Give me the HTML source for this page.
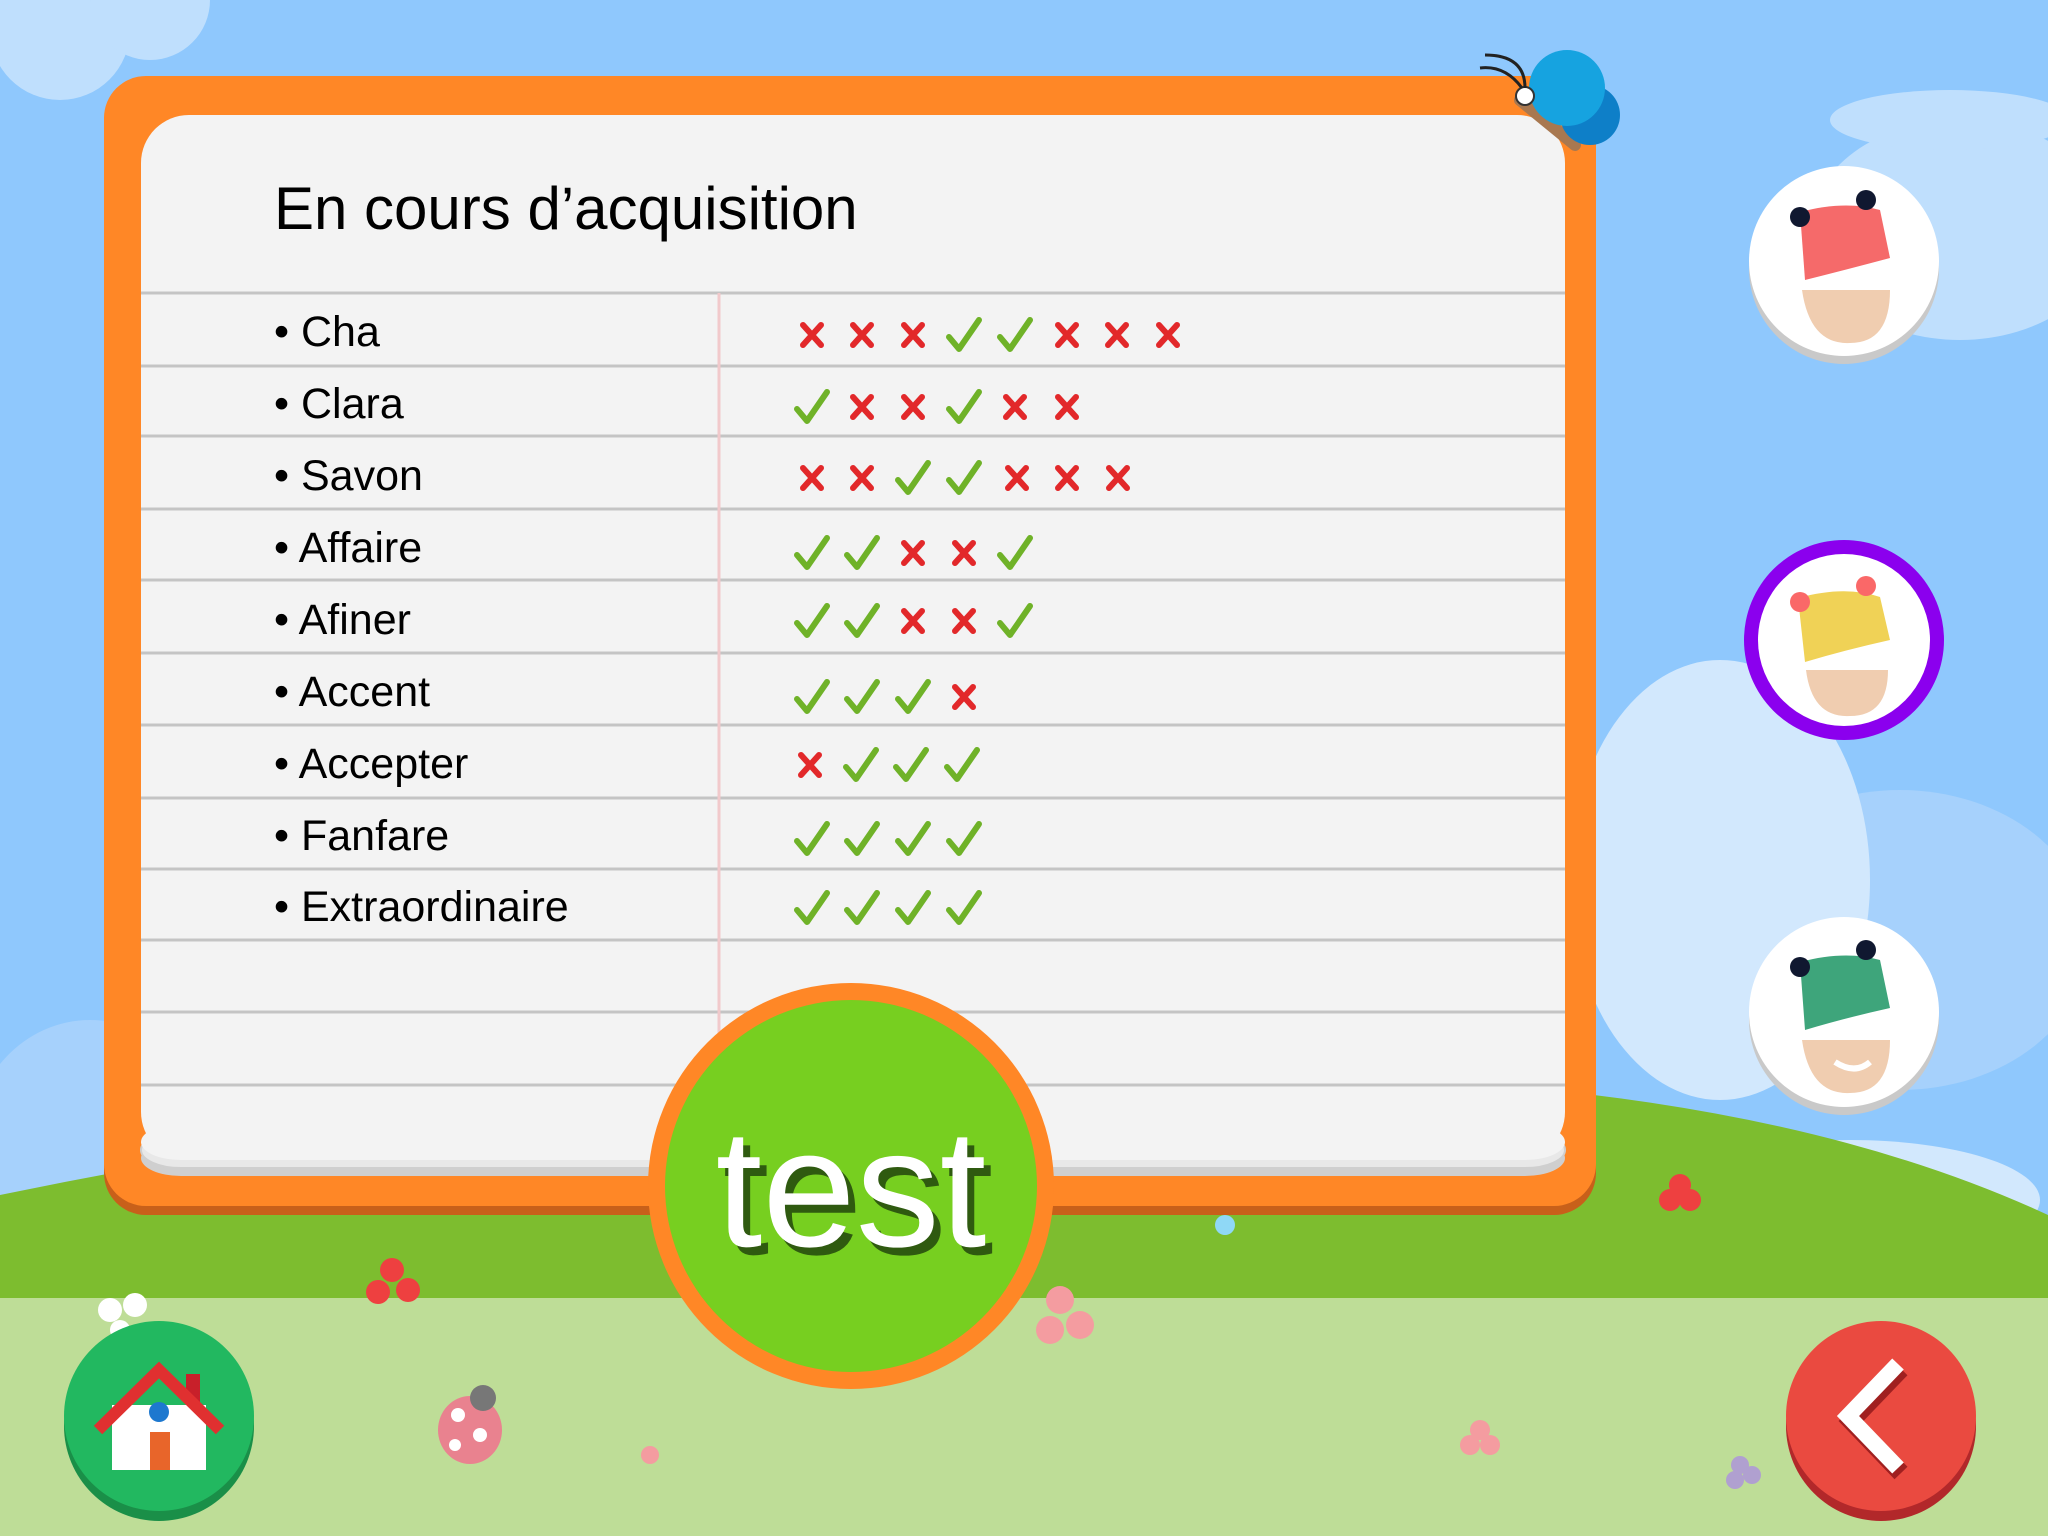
<!DOCTYPE html>
<html><head><meta charset="utf-8">
<style>
*{margin:0;padding:0;box-sizing:border-box}
body{width:2048px;height:1536px;overflow:hidden;position:relative;background:#8fc8fd;font-family:"Liberation Sans",sans-serif}
.abs{position:absolute}
.word{position:absolute;left:274px;font-size:43px;color:#000;line-height:1}
</style></head><body>
<svg class="abs" style="left:0;top:0" width="2048" height="1536">
 <g fill="#bfdffd">
  <circle cx="60" cy="30" r="70"/><circle cx="150" cy="0" r="60"/>
  <ellipse cx="1960" cy="230" rx="150" ry="110"/><ellipse cx="1950" cy="120" rx="120" ry="30"/>
 </g>
 <g fill="#a6d1fc">
  <ellipse cx="1900" cy="940" rx="190" ry="150"/>
  <ellipse cx="90" cy="1150" rx="120" ry="130"/>
 </g>
 <g fill="#d2e8fd">
  <ellipse cx="1720" cy="880" rx="150" ry="220"/>
  <ellipse cx="1850" cy="1200" rx="190" ry="60"/>
 </g>
 <path d="M0 1195 Q700 1050 1420 1080 Q1800 1100 2048 1215 L2048 1300 L0 1300Z" fill="#7dbd2f"/>
 <rect x="0" y="1298" width="2048" height="238" fill="#bedd97"/>
 <g fill="#ee4040"><circle cx="392" cy="1270" r="12"/><circle cx="408" cy="1290" r="12"/><circle cx="378" cy="1292" r="12"/><circle cx="1680" cy="1185" r="11"/><circle cx="1690" cy="1200" r="11"/><circle cx="1670" cy="1200" r="11"/></g>
 <g fill="#f49ca0"><circle cx="1060" cy="1300" r="14"/><circle cx="1080" cy="1325" r="14"/><circle cx="1050" cy="1330" r="14"/><circle cx="650" cy="1455" r="9"/><circle cx="1480" cy="1430" r="10"/><circle cx="1490" cy="1445" r="10"/><circle cx="1470" cy="1445" r="10"/></g>
 <g fill="#fff"><circle cx="110" cy="1310" r="12"/><circle cx="135" cy="1305" r="12"/><circle cx="120" cy="1330" r="10"/></g>
 <g fill="#b0a0d0"><circle cx="1740" cy="1465" r="9"/><circle cx="1752" cy="1475" r="9"/><circle cx="1735" cy="1480" r="9"/></g>
 <circle cx="1225" cy="1225" r="10" fill="#8fd8f6"/>
 <ellipse cx="470" cy="1430" rx="32" ry="34" fill="#e9828f"/><circle cx="483" cy="1398" r="13" fill="#777"/>
 <g fill="#fff"><circle cx="458" cy="1415" r="7"/><circle cx="480" cy="1435" r="7"/><circle cx="455" cy="1445" r="6"/></g>
 <rect x="104" y="80" width="1492" height="1135" rx="42" fill="#c8601a"/>
 <rect x="104" y="76" width="1492" height="1130" rx="42" fill="#ff8726"/>
 <rect x="141" y="1140" width="1424" height="36" rx="40" fill="#cfcfcf"/>
 <rect x="141" y="1132" width="1424" height="36" rx="40" fill="#e8e8e8" stroke="#cfcfcf" stroke-width="2"/>
 <rect x="141" y="115" width="1424" height="1045" rx="48" fill="#f3f3f3"/>
 <rect x="141" y="1124" width="1424" height="36" rx="40" fill="#f3f3f3"/>
 <g stroke="#c4c4c4" stroke-width="3">
  <line x1="141" y1="293" x2="1565" y2="293"/><line x1="141" y1="366" x2="1565" y2="366"/>
  <line x1="141" y1="436" x2="1565" y2="436"/><line x1="141" y1="509" x2="1565" y2="509"/>
  <line x1="141" y1="580" x2="1565" y2="580"/><line x1="141" y1="653" x2="1565" y2="653"/>
  <line x1="141" y1="725" x2="1565" y2="725"/><line x1="141" y1="798" x2="1565" y2="798"/>
  <line x1="141" y1="869" x2="1565" y2="869"/><line x1="141" y1="940" x2="1565" y2="940"/>
  <line x1="141" y1="1012" x2="1565" y2="1012"/><line x1="141" y1="1085" x2="1565" y2="1085"/>
 </g>
 <line x1="719" y1="293" x2="719" y2="1150" stroke="#f1c9cb" stroke-width="3"/>
 <path d="M1520 100 L1575 145" stroke="#a87850" stroke-width="12" stroke-linecap="round"/>
 <circle cx="1590" cy="115" r="30" fill="#0e7fc8"/><circle cx="1567" cy="88" r="38" fill="#16a3e0"/>
 <circle cx="1525" cy="96" r="9" fill="#fff" stroke="#333" stroke-width="2"/>
 <path d="M1525 88 Q1525 55 1485 55 M1522 88 Q1505 65 1480 68" stroke="#222" stroke-width="3" fill="none"/>
 <circle cx="851" cy="1186" r="203" fill="#ff8726"/>
 <circle cx="851" cy="1186" r="186" fill="#77cf20"/>
 <circle cx="159" cy="1426" r="95" fill="#1a8f48"/>
 <circle cx="159" cy="1416" r="95" fill="#22b860"/>
 <rect x="186" y="1374" width="14" height="30" fill="#c8202a"/>
 <rect x="112" y="1405" width="94" height="65" fill="#fff"/>
 <path d="M98 1430 L159 1370 L220 1430" stroke="#e03030" stroke-width="12" fill="none"/>
 <circle cx="159" cy="1412" r="10" fill="#1d78cf"/>
 <rect x="150" y="1432" width="20" height="38" fill="#e8652a"/>
 <circle cx="1881" cy="1426" r="95" fill="#b2282a"/>
 <circle cx="1881" cy="1416" r="95" fill="#ea4a40"/>
 <path d="M1898 1364 L1848 1416 L1898 1468" stroke="#a02020" stroke-width="18" fill="none" transform="translate(3,5)"/>
 <path d="M1898 1364 L1848 1416 L1898 1468" stroke="#fff" stroke-width="16" fill="none"/>
 <circle cx="1844" cy="269" r="95" fill="#c9c9c9"/><circle cx="1844" cy="261" r="95" fill="#fff"/>
 <path d="M1802 290 Q1810 345 1850 343 Q1890 343 1890 290Z" fill="#f0cdb0"/>
 <path d="M1800 212 Q1845 200 1880 210 L1890 258 Q1845 270 1805 280Z" fill="#f56a6a"/>
 <circle cx="1800" cy="217" r="10" fill="#101830"/><circle cx="1866" cy="200" r="10" fill="#101830"/>
 <circle cx="1844" cy="640" r="100" fill="#8b00ee"/><circle cx="1844" cy="640" r="86" fill="#fff"/>
 <path d="M1806 670 Q1812 718 1850 716 Q1888 716 1888 670Z" fill="#f0cdb0"/>
 <path d="M1798 598 Q1845 585 1880 597 L1890 640 Q1845 650 1805 662Z" fill="#f0d256"/>
 <circle cx="1800" cy="602" r="10" fill="#fa6868"/><circle cx="1866" cy="586" r="10" fill="#fa6868"/>
 <circle cx="1844" cy="1020" r="95" fill="#c9c9c9"/><circle cx="1844" cy="1012" r="95" fill="#fff"/>
 <path d="M1802 1040 Q1810 1095 1850 1093 Q1890 1093 1890 1040Z" fill="#f0cdb0"/>
 <path d="M1835 1062 Q1855 1075 1870 1062" stroke="#fff" stroke-width="6" fill="none"/>
 <path d="M1800 962 Q1845 950 1880 960 L1890 1008 Q1845 1018 1805 1030Z" fill="#3ea57b"/>
 <circle cx="1800" cy="967" r="10" fill="#101830"/><circle cx="1866" cy="950" r="10" fill="#101830"/>
</svg>

<div class="abs" style="left:274px;top:174px;font-size:60px;color:#000">En cours d’acquisition</div>
<div class="word" style="top:311px">• Cha</div>
<div class="word" style="top:383px">• Clara</div>
<div class="word" style="top:455px">• Savon</div>
<div class="word" style="top:527px">• Affaire</div>
<div class="word" style="top:599px">• Afiner</div>
<div class="word" style="top:671px">• Accent</div>
<div class="word" style="top:743px">• Accepter</div>
<div class="word" style="top:815px">• Fanfare</div>
<div class="word" style="top:886px">• Extraordinaire</div>

<svg class="abs" style="left:0;top:0" width="2048" height="1536">
 <defs>
  <path id="x" d="M-9 -10 L9 10 M9 -10 L-9 10" stroke="#e2282a" stroke-width="6" stroke-linecap="round"/>
  <path id="v" d="M-15 2 L-5 14 L15 -15" stroke="#6fb228" stroke-width="6" fill="none" stroke-linecap="round" stroke-linejoin="round"/>
 </defs>
 <g transform="translate(0,335)"><use href="#x" x="812"/><use href="#x" x="862"/><use href="#x" x="913"/><use href="#v" x="964"/><use href="#v" x="1015"/><use href="#x" x="1067"/><use href="#x" x="1117"/><use href="#x" x="1168"/></g>
 <g transform="translate(0,407)"><use href="#v" x="812"/><use href="#x" x="862"/><use href="#x" x="913"/><use href="#v" x="964"/><use href="#x" x="1015"/><use href="#x" x="1067"/></g>
 <g transform="translate(0,478)"><use href="#x" x="812"/><use href="#x" x="862"/><use href="#v" x="913"/><use href="#v" x="964"/><use href="#x" x="1017"/><use href="#x" x="1067"/><use href="#x" x="1118"/></g>
 <g transform="translate(0,553)"><use href="#v" x="812"/><use href="#v" x="862"/><use href="#x" x="913"/><use href="#x" x="964"/><use href="#v" x="1015"/></g>
 <g transform="translate(0,621)"><use href="#v" x="812"/><use href="#v" x="862"/><use href="#x" x="913"/><use href="#x" x="964"/><use href="#v" x="1015"/></g>
 <g transform="translate(0,697)"><use href="#v" x="812"/><use href="#v" x="862"/><use href="#v" x="913"/><use href="#x" x="964"/></g>
 <g transform="translate(0,765)"><use href="#x" x="810"/><use href="#v" x="861"/><use href="#v" x="911"/><use href="#v" x="962"/></g>
 <g transform="translate(0,839)"><use href="#v" x="812"/><use href="#v" x="862"/><use href="#v" x="913"/><use href="#v" x="964"/></g>
 <g transform="translate(0,908)"><use href="#v" x="812"/><use href="#v" x="862"/><use href="#v" x="913"/><use href="#v" x="964"/></g>
 <text x="858" y="1254" text-anchor="middle" font-family="Liberation Sans, sans-serif" font-size="168" fill="#2f5a10">test</text>
 <text x="851" y="1246" text-anchor="middle" font-family="Liberation Sans, sans-serif" font-size="168" fill="#fff">test</text>
</svg>
</body></html>
